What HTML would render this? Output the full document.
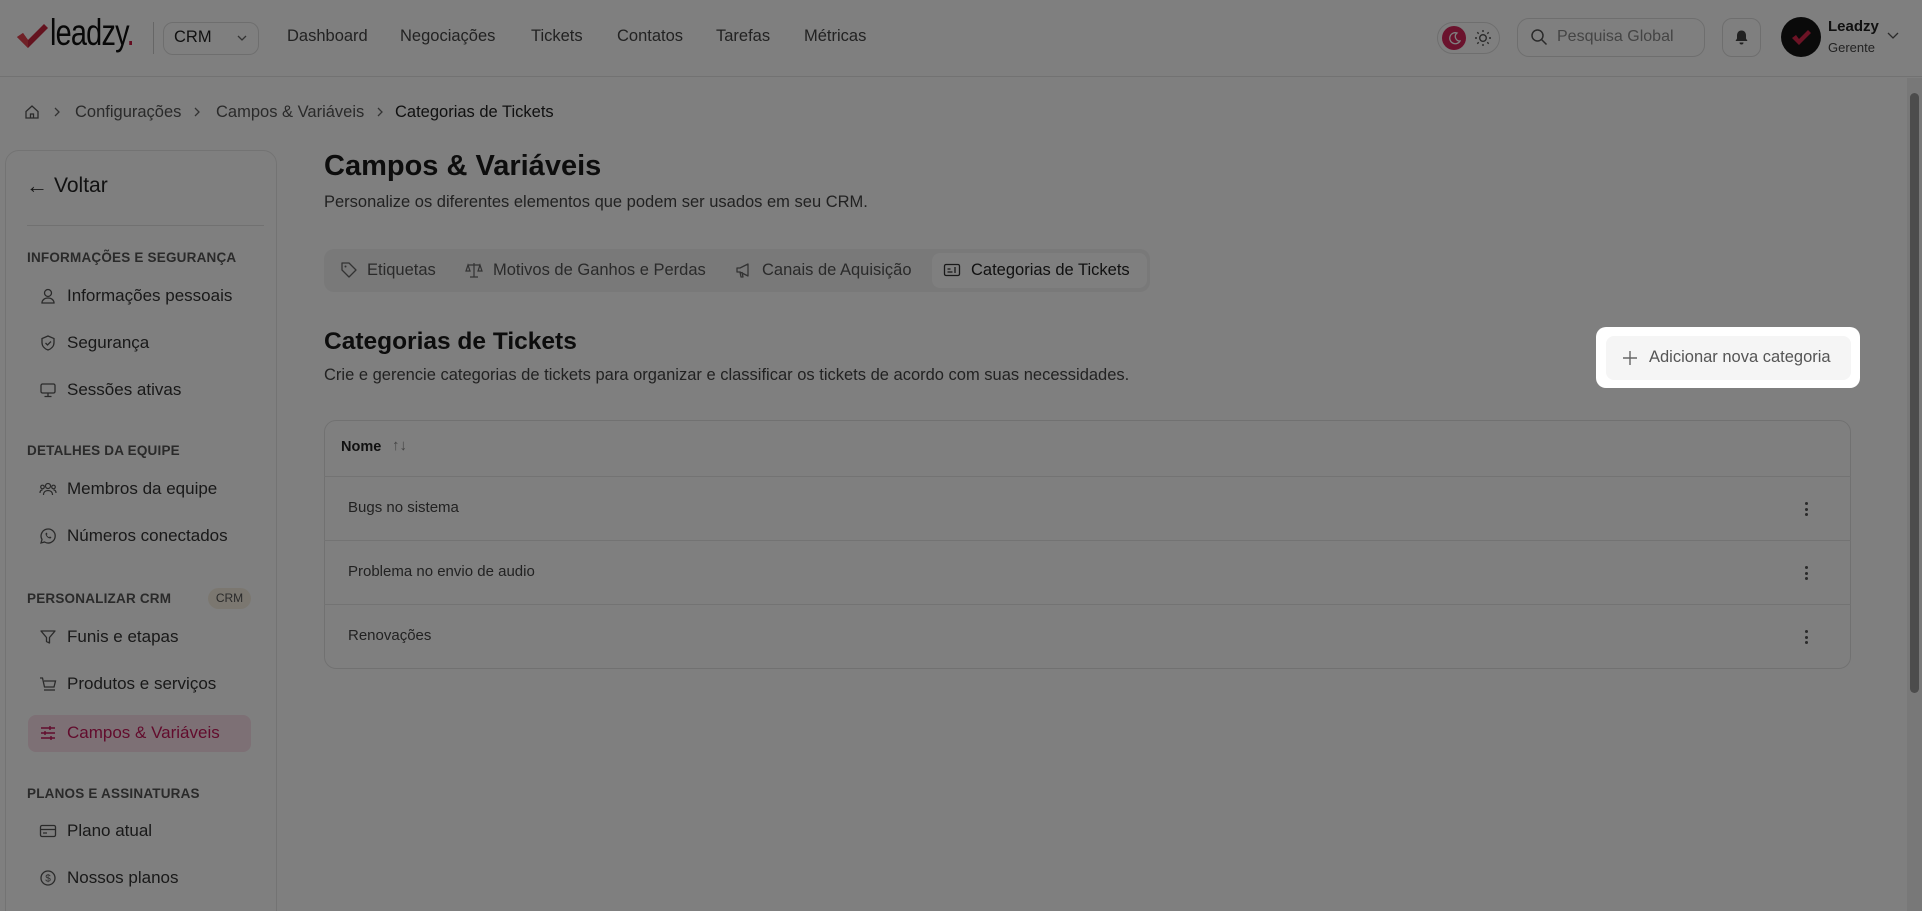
<!DOCTYPE html>
<html style="overflow:hidden;height:911px"><head><meta charset="utf-8"><style>
*{box-sizing:border-box;margin:0;padding:0}
body{width:1922px;height:911px;overflow:hidden;background:#fff;font-family:"Liberation Sans",sans-serif;color:#222;position:relative}
.a{position:absolute;white-space:nowrap}
.top{position:absolute;left:0;top:0;width:1922px;height:77px;border-bottom:1px solid #e4e4e4}
.nav{font-size:16.5px;color:#444;top:27px}
.side{position:absolute;left:5px;top:150px;width:272px;height:775px;border:1px solid #e6e6e6;border-radius:14px}
.sh{font-size:13.5px;font-weight:bold;color:#555;left:27px;letter-spacing:.2px}
.si{font-size:17px;color:#333;left:67px}
.ic{position:absolute;left:39px;width:18px;height:18px}
.tab{font-size:16.5px;color:#555;top:261px}
.row{position:absolute;left:324px;width:1527px;border-top:1px solid #e6e6e6}
.dots{position:absolute;left:1805px;width:4px}
.dots i{display:block;width:3px;height:3px;background:#555;border-radius:50%;margin-bottom:2.5px}
.chev{position:absolute;top:106px}
</style></head><body>
<div class="top"></div>
<svg class="a" style="left:15px;top:22px" width="34" height="28" viewBox="0 0 34 28"><path d="M2 15 L8 11 L13 18 L29 2 L33 6 L13 26 Z" fill="#c8263f"/><path d="M2 15 L8 11 L13 18 L13 26 Z" fill="#e0434f"/></svg>
<div class="a" style="left:50px;top:12px;font-size:37px;color:#111;transform:scaleX(.78);transform-origin:left;letter-spacing:-1px">leadzy<span style="color:#c8163f">.</span></div>
<div class="a" style="left:153px;top:22px;width:1px;height:32px;background:#ccc"></div>
<div class="a" style="left:163px;top:22px;width:96px;height:33px;border:1px solid #ddd;border-radius:10px"></div>
<div class="a" style="left:174px;top:28px;font-size:16.5px;color:#222">CRM</div>
<svg class="a" style="left:236px;top:33px" width="12" height="10" viewBox="0 0 12 10"><path d="M2 3l4 4 4-4" stroke="#666" fill="none" stroke-width="1.3"/></svg>
<div class="a nav" style="left:287px">Dashboard</div>
<div class="a nav" style="left:400px">Negociações</div>
<div class="a nav" style="left:531px">Tickets</div>
<div class="a nav" style="left:617px">Contatos</div>
<div class="a nav" style="left:716px">Tarefas</div>
<div class="a nav" style="left:804px">Métricas</div>
<div class="a" style="left:1437px;top:22px;width:63px;height:32px;border:1px solid #ddd;border-radius:16px"></div>
<div class="a" style="left:1442px;top:26px;width:24px;height:24px;border-radius:50%;background:#d6265a"></div>
<svg class="a" style="left:1447px;top:31px" width="14" height="14" viewBox="0 0 14 14"><path d="M10 2a5.5 5.5 0 1 0 3 8 4.5 4.5 0 0 1-3-8z" stroke="#fff" fill="none" stroke-width="1.3"/></svg>
<svg class="a" style="left:1474px;top:29px" width="18" height="18" viewBox="0 0 18 18"><circle cx="9" cy="9" r="3.3" stroke="#555" fill="none" stroke-width="1.4"/><g stroke="#555" stroke-width="1.4"><path d="M9 1v2M9 15v2M1 9h2M15 9h2M3.3 3.3l1.4 1.4M13.3 13.3l1.4 1.4M3.3 14.7l1.4-1.4M13.3 4.7l1.4-1.4"/></g></svg>
<div class="a" style="left:1517px;top:18px;width:188px;height:39px;border:1px solid #ddd;border-radius:12px"></div>
<svg class="a" style="left:1530px;top:28px" width="18" height="18" viewBox="0 0 18 18"><circle cx="7.5" cy="7.5" r="5.5" stroke="#555" fill="none" stroke-width="1.5"/><path d="M11.5 11.5l5 5" stroke="#555" stroke-width="1.5"/></svg>
<div class="a" style="left:1557px;top:28px;font-size:16px;color:#888">Pesquisa Global</div>
<div class="a" style="left:1722px;top:18px;width:39px;height:39px;border:1px solid #ddd;border-radius:10px"></div>
<svg class="a" style="left:1733px;top:29px" width="17" height="17" viewBox="0 0 17 17"><path d="M8.5 1.5c-3 0-4.5 2.3-4.5 5v3L2.5 12h12L13 9.5v-3c0-2.7-1.5-5-4.5-5z" fill="#444"/><path d="M6.5 13.5a2 2 0 0 0 4 0z" fill="#444"/></svg>
<div class="a" style="left:1781px;top:17px;width:40px;height:40px;border-radius:50%;background:#151515"></div>
<svg class="a" style="left:1790px;top:28px" width="22" height="18" viewBox="0 0 22 18"><path d="M2 10l4-3 3 4 9-9 3 3-12 12z" fill="#d8264a"/></svg>
<div class="a" style="left:1828px;top:18px;font-size:15px;font-weight:bold;color:#222">Leadzy</div>
<div class="a" style="left:1828px;top:40px;font-size:13px;color:#444">Gerente</div>
<svg class="a" style="left:1886px;top:31px" width="14" height="10" viewBox="0 0 14 10"><path d="M2 2l5 5 5-5" stroke="#555" fill="none" stroke-width="1.3"/></svg>
<div class="a" style="left:1907px;top:78px;width:15px;height:833px;background:#f1f1f1"></div>
<div class="a" style="left:1910px;top:93px;width:9px;height:600px;background:#999;border-radius:5px"></div>

<svg class="a" style="left:24px;top:104px" width="16" height="16" viewBox="0 0 16 16"><path d="M2 7.5L8 2l6 5.5V14H2z M6.5 14v-4h3v4" stroke="#555" fill="none" stroke-width="1.3"/></svg>
<svg class="chev" style="left:52px" width="10" height="12" viewBox="0 0 10 12"><path d="M3 2l4 4-4 4" stroke="#666" fill="none" stroke-width="1.3"/></svg>
<div class="a" style="left:75px;top:103px;font-size:16.5px;color:#555">Configurações</div>
<svg class="chev" style="left:192px" width="10" height="12" viewBox="0 0 10 12"><path d="M3 2l4 4-4 4" stroke="#666" fill="none" stroke-width="1.3"/></svg>
<div class="a" style="left:216px;top:103px;font-size:16.5px;color:#555">Campos &amp; Variáveis</div>
<svg class="chev" style="left:375px" width="10" height="12" viewBox="0 0 10 12"><path d="M3 2l4 4-4 4" stroke="#666" fill="none" stroke-width="1.3"/></svg>
<div class="a" style="left:395px;top:103px;font-size:16.5px;color:#222">Categorias de Tickets</div>

<div class="side"></div>
<div class="a" style="left:26px;top:173px;font-size:22px;color:#333">←</div>
<div class="a" style="left:54px;top:174px;font-size:21px;color:#222">Voltar</div>
<div class="a" style="left:27px;top:225px;width:237px;height:1px;background:#e3e3e3"></div>
<div class="a sh" style="top:250px">INFORMAÇÕES E SEGURANÇA</div>
<svg class="ic" style="top:287px" viewBox="0 0 18 18"><circle cx="9" cy="6" r="3.5" stroke="#555" fill="none" stroke-width="1.3"/><path d="M3 16c0-3 2.5-5 6-5s6 2 6 5z" stroke="#555" fill="none" stroke-width="1.3"/></svg>
<div class="a si" style="top:286px">Informações pessoais</div>
<svg class="ic" style="top:334px" viewBox="0 0 18 18"><path d="M9 2l6 2.5v4c0 4-3 6.5-6 7.5-3-1-6-3.5-6-7.5v-4z" stroke="#555" fill="none" stroke-width="1.3"/><path d="M6.5 9l2 2 3.5-3.5" stroke="#555" fill="none" stroke-width="1.3"/></svg>
<div class="a si" style="top:333px">Segurança</div>
<svg class="ic" style="top:381px" viewBox="0 0 18 18"><rect x="2" y="3" width="14" height="9" rx="1.5" stroke="#555" fill="none" stroke-width="1.3"/><path d="M9 12v3M5.5 15.5h7" stroke="#555" stroke-width="1.3"/></svg>
<div class="a si" style="top:380px">Sessões ativas</div>
<div class="a sh" style="top:443px">DETALHES DA EQUIPE</div>
<svg class="ic" style="top:480px" viewBox="0 0 18 18"><circle cx="9" cy="6" r="2.5" stroke="#555" fill="none" stroke-width="1.2"/><circle cx="3.5" cy="7" r="1.8" stroke="#555" fill="none" stroke-width="1.2"/><circle cx="14.5" cy="7" r="1.8" stroke="#555" fill="none" stroke-width="1.2"/><path d="M4.5 15c0-3 2-4.5 4.5-4.5s4.5 1.5 4.5 4.5M1 13c0-2 1-3 2.5-3M17 13c0-2-1-3-2.5-3" stroke="#555" fill="none" stroke-width="1.2"/></svg>
<div class="a si" style="top:479px">Membros da equipe</div>
<svg class="ic" style="top:527px" viewBox="0 0 18 18"><path d="M9 2a7 7 0 0 0-6 10.5L2 16l3.6-1A7 7 0 1 0 9 2z" stroke="#555" fill="none" stroke-width="1.3"/><path d="M6.5 6.5c0 2.5 2.5 5 5 5l1-1.2-1.6-.8-.8.8c-1-.4-2-1.4-2.4-2.4l.8-.8-.8-1.6z" fill="#555"/></svg>
<div class="a si" style="top:526px">Números conectados</div>
<div class="a sh" style="top:591px">PERSONALIZAR CRM</div>
<div class="a" style="left:208px;top:588px;width:43px;height:21px;border-radius:11px;background:#f7efe0;font-size:12px;color:#555;text-align:center;line-height:21px">CRM</div>
<svg class="ic" style="top:628px" viewBox="0 0 18 18"><path d="M2 3h14l-5.5 6.5V15l-3-1.5v-4z" stroke="#555" fill="none" stroke-width="1.3" stroke-linejoin="round"/></svg>
<div class="a si" style="top:627px">Funis e etapas</div>
<svg class="ic" style="top:675px" viewBox="0 0 18 18"><path d="M1 3h2.5l2 9h9.5l1.5-6H5" stroke="#555" fill="none" stroke-width="1.3"/><path d="M5 15h11" stroke="#555" stroke-width="1.3"/></svg>
<div class="a si" style="top:674px">Produtos e serviços</div>
<div class="a" style="left:28px;top:715px;width:223px;height:37px;border-radius:8px;background:#fbe0ea"></div>
<svg class="ic" style="top:724px" viewBox="0 0 18 18"><g stroke="#c4185a" stroke-width="1.4"><path d="M2 4h14M2 9h14M2 14h14"/><path d="M11 2v4M6 7v4M12 12v4"/></g></svg>
<div class="a si" style="top:723px;color:#c4185a">Campos &amp; Variáveis</div>
<div class="a sh" style="top:786px">PLANOS E ASSINATURAS</div>
<svg class="ic" style="top:822px" viewBox="0 0 18 18"><rect x="1.5" y="3.5" width="15" height="11" rx="1.5" stroke="#555" fill="none" stroke-width="1.3"/><path d="M1.5 7.5h15M4 11h4" stroke="#555" stroke-width="1.3"/></svg>
<div class="a si" style="top:821px">Plano atual</div>
<svg class="ic" style="top:869px" viewBox="0 0 18 18"><circle cx="9" cy="9" r="7" stroke="#555" fill="none" stroke-width="1.3"/><text x="9" y="12.5" font-size="10" text-anchor="middle" fill="#555" font-family="Liberation Sans">$</text></svg>
<div class="a si" style="top:868px">Nossos planos</div>

<div class="a" style="left:324px;top:150px;font-size:29px;font-weight:bold;color:#1a1a1a">Campos &amp; Variáveis</div>
<div class="a" style="left:324px;top:193px;font-size:16.5px;color:#444">Personalize os diferentes elementos que podem ser usados em seu CRM.</div>
<div class="a" style="left:324px;top:249px;width:826px;height:43px;border-radius:10px;background:#f2f2f3"></div>
<div class="a" style="left:932px;top:253px;width:215px;height:35px;border-radius:8px;background:#fff"></div>
<svg class="a" style="left:340px;top:261px" width="18" height="18" viewBox="0 0 18 18"><path d="M2 2h7l7 7-7 7-7-7z" stroke="#666" fill="none" stroke-width="1.3" stroke-linejoin="round"/><circle cx="5.5" cy="5.5" r="1" fill="#666"/></svg>
<div class="a tab" style="left:367px">Etiquetas</div>
<svg class="a" style="left:465px;top:261px" width="18" height="18" viewBox="0 0 18 18"><path d="M9 2v14M5 16h8M3 4h12M3 4l-2 6h4zM15 4l-2 6h4z" stroke="#666" fill="none" stroke-width="1.2"/></svg>
<div class="a tab" style="left:493px">Motivos de Ganhos e Perdas</div>
<svg class="a" style="left:735px;top:261px" width="18" height="18" viewBox="0 0 18 18"><path d="M2 7v4h3l8 4V3L5 7zM5 11l1 5h2l-1-5" stroke="#666" fill="none" stroke-width="1.3" stroke-linejoin="round"/></svg>
<div class="a tab" style="left:762px">Canais de Aquisição</div>
<svg class="a" style="left:943px;top:261px" width="18" height="18" viewBox="0 0 18 18"><rect x="1.5" y="3.5" width="15" height="11" rx="1.5" stroke="#333" fill="none" stroke-width="1.3"/><path d="M4.5 8h3M4.5 11h5M12 6v6" stroke="#333" stroke-width="1.3"/></svg>
<div class="a tab" style="left:971px;color:#222">Categorias de Tickets</div>

<div class="a" style="left:324px;top:328px;font-size:24.5px;font-weight:bold;color:#1a1a1a">Categorias de Tickets</div>
<div class="a" style="left:324px;top:366px;font-size:16.5px;color:#444">Crie e gerencie categorias de tickets para organizar e classificar os tickets de acordo com suas necessidades.</div>

<div class="a" style="left:324px;top:420px;width:1527px;height:249px;border:1px solid #e3e3e3;border-radius:12px"></div>
<div class="a" style="left:341px;top:439px;font-size:14.5px;font-weight:bold;color:#222">Nome</div>
<div class="a" style="left:392px;top:437px;font-size:15px;color:#888">↑↓</div>
<div class="row" style="top:476px"></div>
<div class="row" style="top:540px"></div>
<div class="row" style="top:604px"></div>
<div class="a" style="left:348px;top:499px;font-size:15px;color:#444">Bugs no sistema</div>
<div class="a" style="left:348px;top:563px;font-size:15px;color:#444">Problema no envio de audio</div>
<div class="a" style="left:348px;top:627px;font-size:15px;color:#444">Renovações</div>
<div class="dots" style="top:502px"><i></i><i></i><i></i></div>
<div class="dots" style="top:566px"><i></i><i></i><i></i></div>
<div class="dots" style="top:630px"><i></i><i></i><i></i></div>

<div class="a" style="left:1596px;top:327px;width:264px;height:61px;border-radius:10px;background:#fff;box-shadow:0 0 0 3000px rgba(0,0,0,.5)"></div>
<div class="a" style="left:1606px;top:336px;width:245px;height:44px;border-radius:8px;background:#f5f5f5"></div>
<svg class="a" style="left:1622px;top:350px" width="16" height="16" viewBox="0 0 16 16"><path d="M8 1v14M1 8h14" stroke="#666" stroke-width="1.4"/></svg>
<div class="a" style="left:1649px;top:348px;font-size:16.5px;color:#555">Adicionar nova categoria</div>
</body></html>
